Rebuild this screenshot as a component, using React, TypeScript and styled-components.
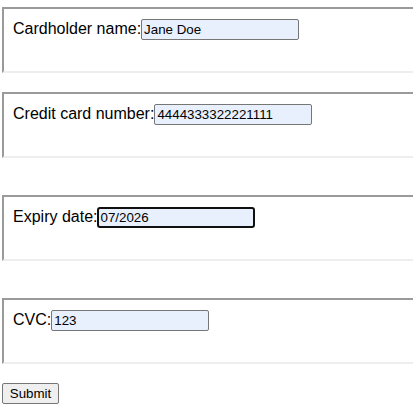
import React from "react";
import styled, { createGlobalStyle } from "styled-components";

const Global = createGlobalStyle`
  html, body {
    margin: 0;
    padding: 0;
    overflow: hidden;
    background: #ffffff;
    font-family: "Liberation Sans", Arial, sans-serif;
    color: #000000;
  }
`;

const Form = styled.form`
  display: flex;
  flex-direction: column;
  align-items: flex-start;
  padding: 7px 0 0 2px;
`;

const Field = styled.div<{ $gap: number }>`
  align-self: stretch;
  margin-top: ${(p) => p.$gap}px;
  border-style: solid;
  border-width: 2px 0 2px 2px;
  border-color: #9a9a9a #eeeeee #eeeeee #9a9a9a;
  padding: 10px 9px 31px;
`;

const Row = styled.div`
  display: flex;
  align-items: baseline;
`;

const Label = styled.label`
  font-size: 16px;
  line-height: 18px;
  white-space: nowrap;
`;

const Input = styled.input<{ $focused?: boolean }>`
  box-sizing: border-box;
  width: 158px;
  height: 21px;
  margin: 0;
  font-family: "Liberation Sans", Arial, sans-serif;
  font-size: 13.333px;
  color: #000000;
  background: #e8f0fe;
  border: ${(p) => (p.$focused ? "2px solid #101010" : "1px solid #767676")};
  border-radius: ${(p) => (p.$focused ? "3px" : "2px")};
  padding: ${(p) => (p.$focused ? "0 1px" : "1px 2px")};
  outline: none;
`;

const SubmitButton = styled.button`
  margin-top: 19px;
  box-sizing: border-box;
  width: 57px;
  height: 21px;
  font-family: "Liberation Sans", Arial, sans-serif;
  font-size: 13.333px;
  color: #000000;
  background: #efefef;
  border: 1px solid #767676;
  border-radius: 2px;
  padding: 1px 6px;
`;

const fields = [
  { id: "name", label: "Cardholder name:", value: "Jane Doe", gap: 0 },
  { id: "number", label: "Credit card number:", value: "4444333322221111", gap: 19 },
  { id: "expiry", label: "Expiry date:", value: "07/2026", gap: 37, focused: true },
  { id: "cvc", label: "CVC:", value: "123", gap: 37 },
];

export default function App() {
  return (
    <>
      <Global />
      <Form onSubmit={(e) => e.preventDefault()}>
        {fields.map((f) => (
          <Field key={f.id} $gap={f.gap}>
            <Row>
              <Label htmlFor={f.id}>{f.label}</Label>
              <Input
                id={f.id}
                defaultValue={f.value}
                $focused={f.focused}
                autoFocus={f.focused}
                onFocus={(e) => {
                  const el = e.currentTarget;
                  const n = el.value.length;
                  el.setSelectionRange(n, n);
                }}
              />
            </Row>
          </Field>
        ))}
        <SubmitButton type="submit">Submit</SubmitButton>
      </Form>
    </>
  );
}
